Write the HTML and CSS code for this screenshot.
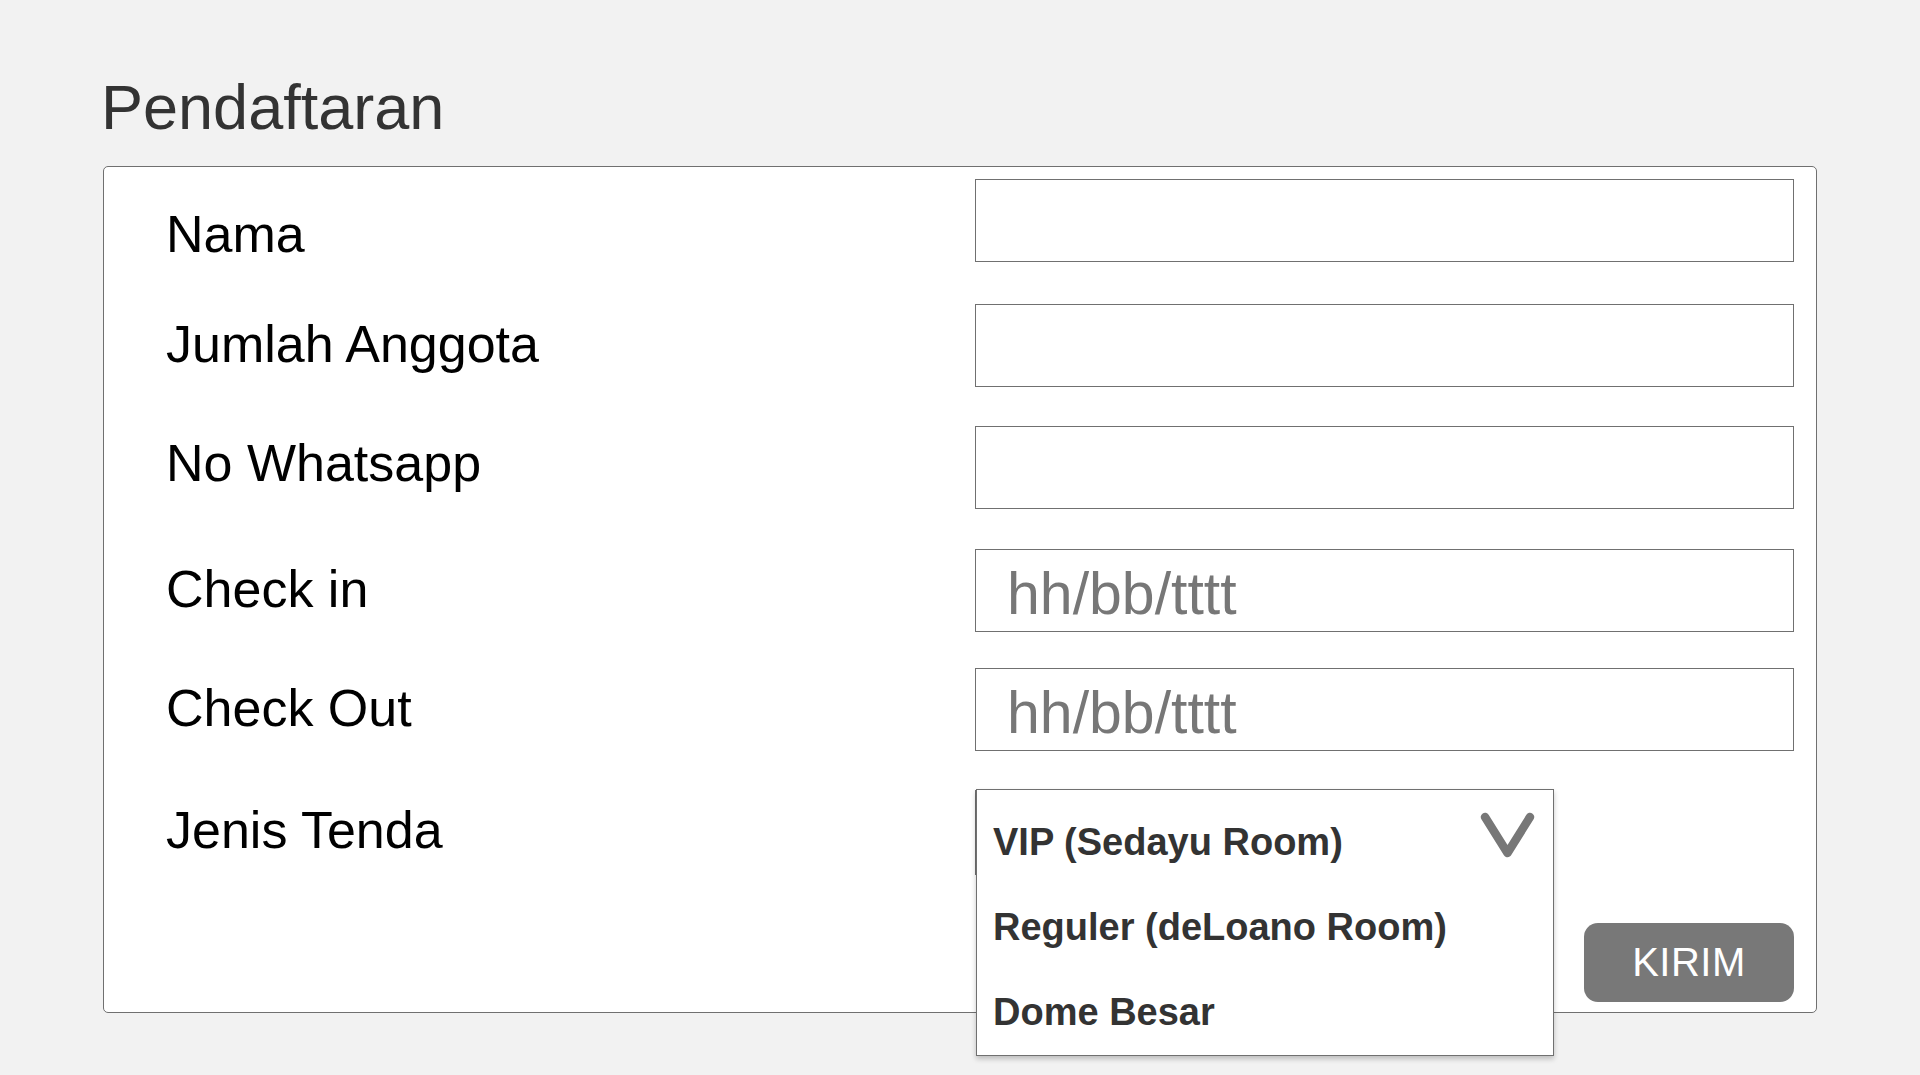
FILE: index.html
```html
<!DOCTYPE html>
<html lang="id">
<head>
<meta charset="utf-8">
<title>Pendaftaran</title>
<link rel="stylesheet" href="styles.css">
</head>
<body>
<main class="page">
  <h1 class="title">Pendaftaran</h1>
  <form class="card">
    <label class="label label--first" for="nama">Nama</label>
    <input class="field" id="nama" type="text">

    <label class="label" for="jumlah">Jumlah Anggota</label>
    <input class="field" id="jumlah" type="text">

    <label class="label label--tight" for="wa">No Whatsapp</label>
    <input class="field" id="wa" type="text">

    <label class="label" for="checkin">Check in</label>
    <input class="field" id="checkin" type="text" placeholder="hh/bb/tttt">

    <label class="label" for="checkout">Check Out</label>
    <input class="field" id="checkout" type="text" placeholder="hh/bb/tttt">

    <label class="label">Jenis Tenda</label>
    <div class="select">
      <div class="select__list">
        <div class="select__option">VIP (Sedayu Room)</div>
        <div class="select__option">Reguler (deLoano Room)</div>
        <div class="select__option">Dome Besar</div>
        <svg class="select__chevron" width="55" height="46" viewBox="0 0 55 46">
          <polyline points="5,5 27.5,41 50,5" fill="none" stroke="#777" stroke-width="8.5" stroke-linecap="round" stroke-linejoin="round"/>
        </svg>
      </div>
    </div>

    <button class="submit" type="button">KIRIM</button>
  </form>
</main>
</body>
</html>
```
FILE: styles.css
```css
html, body {
  margin: 0;
  padding: 0;
  background: #f2f2f2;
}

.page {
  box-sizing: border-box;
  min-height: 1075px;
  padding: 76px 0 0 103px;
  font-family: "Liberation Sans", Arial, sans-serif;
}

.title {
  margin: 0 0 28px -2px;
  font-size: 63px;
  line-height: 62px;
  font-weight: normal;
  color: #333;
}

.card {
  box-sizing: border-box;
  width: 1714px;
  height: 847px;
  padding: 12px 22px 10px 62px;
  background: #fff;
  border: 1px solid #707070;
  border-radius: 5px;
  display: grid;
  grid-template-columns: 809px 819px;
  grid-template-rows: 125px 122px 123px 119px 122px 133px 79px;
  align-items: start;
}

.label {
  padding-top: 14px;
  font-size: 52px;
  line-height: 52px;
  color: #000;
}

.label--first {
  padding-top: 29px;
}

.label--tight {
  padding-top: 11px;
}

.field {
  box-sizing: border-box;
  width: 819px;
  height: 83px;
  margin: 0;
  padding: 6px 31px 0;
  border: 1px solid #707070;
  border-radius: 0;
  background: #fff;
  font-family: "Liberation Sans", Arial, sans-serif;
  font-size: 59px;
  color: #333;
  outline: none;
}

.field::placeholder {
  color: #777;
  opacity: 1;
}

.select {
  position: relative;
  box-sizing: border-box;
  width: 578px;
  height: 85px;
  border: 1px solid #707070;
  background: #fff;
}

.select__list {
  position: absolute;
  top: -2px;
  left: 0;
  box-sizing: border-box;
  width: 578px;
  height: 267px;
  padding: 10px 0 0 16px;
  background: #fff;
  border: 1px solid #707070;
  box-shadow: 0 3px 5px rgba(0, 0, 0, 0.22);
  z-index: 2;
}

.select__option {
  height: 85px;
  font-size: 38px;
  line-height: 85px;
  font-weight: bold;
  color: #333;
  white-space: nowrap;
}

.select__chevron {
  position: absolute;
  top: 22px;
  right: 18px;
}

.submit {
  grid-column: 2;
  justify-self: end;
  width: 210px;
  height: 79px;
  padding: 0;
  border: none;
  border-radius: 14px;
  background: #787878;
  color: #fff;
  font-family: "Liberation Sans", Arial, sans-serif;
  font-size: 40px;
  letter-spacing: 0.5px;
  cursor: pointer;
}
```
